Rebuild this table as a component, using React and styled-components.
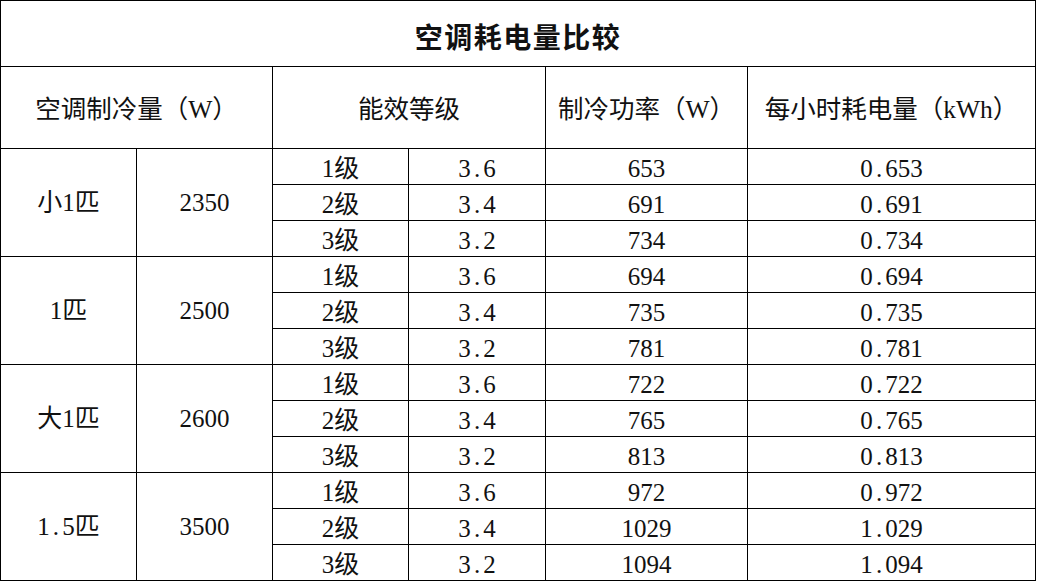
import React from 'react'
import styled, { createGlobalStyle } from 'styled-components'

const GlobalStyle = createGlobalStyle`
  html, body {
    margin: 0;
    padding: 0;
    background: #fff;
  }
  body {
    font-family: "Liberation Serif", "Noto Sans CJK SC", serif;
    color: #000;
  }
`

const Table = styled.table`
  border-collapse: collapse;
  table-layout: fixed;
  width: 1035px;
  font-size: 25px;
  color: #111;

  td, th {
    border: 1px solid #000;
    padding: 0;
    text-align: center;
    vertical-align: middle;
    line-height: 1;
    white-space: nowrap;
  }
`

const TitleCell = styled.th`
  height: 61px;
  font-family: "Noto Sans CJK SC", sans-serif;
  font-size: 28px;
  font-weight: 700;
  letter-spacing: 1.5px;
  padding-top: 4px !important;
`

const HeadCell = styled.th`
  height: 77px;
  font-weight: 400;
  font-size: 25.5px;
  padding-top: 4px !important;
`

const Cell = styled.td`
  height: 31px;
  padding-top: ${p => (p.$group ? '0' : '4px')} !important;
`

const Dot = styled.span`
  display: inline-block;
  width: 0.5em;
  text-align: center;
`

const Num = ({ value }) => {
  const parts = String(value).split('.')
  if (parts.length === 1) return <>{value}</>
  return <>{parts[0]}<Dot>.</Dot>{parts[1]}</>
}

const groups = [
  { name: '小1匹', cap: 2350, rows: [['1级', '3.6', 653, '0.653'], ['2级', '3.4', 691, '0.691'], ['3级', '3.2', 734, '0.734']] },
  { name: '1匹', cap: 2500, rows: [['1级', '3.6', 694, '0.694'], ['2级', '3.4', 735, '0.735'], ['3级', '3.2', 781, '0.781']] },
  { name: '大1匹', cap: 2600, rows: [['1级', '3.6', 722, '0.722'], ['2级', '3.4', 765, '0.765'], ['3级', '3.2', 813, '0.813']] },
  { name: '1.5匹', cap: 3500, rows: [['1级', '3.6', 972, '0.972'], ['2级', '3.4', 1029, '1.029'], ['3级', '3.2', 1094, '1.094']] }
]

const App = () => {
  return <>
    <GlobalStyle />
    <Table>
      <colgroup>
        <col style={{ width: 136 }} />
        <col style={{ width: 136 }} />
        <col style={{ width: 136 }} />
        <col style={{ width: 137 }} />
        <col style={{ width: 202 }} />
        <col style={{ width: 288 }} />
      </colgroup>
      <thead>
        <tr><TitleCell colSpan={6}>空调耗电量比较</TitleCell></tr>
        <tr>
          <HeadCell colSpan={2}>空调制冷量（W）</HeadCell>
          <HeadCell colSpan={2}>能效等级</HeadCell>
          <HeadCell>制冷功率（W）</HeadCell>
          <HeadCell>每小时耗电量（kWh）</HeadCell>
        </tr>
      </thead>
      <tbody>
        {groups.map(g => g.rows.map((r, i) => (
          <tr key={`${g.name}.${i}`}>
            {i === 0 && <Cell $group rowSpan={3}><Num value={g.name} /></Cell>}
            {i === 0 && <Cell $group rowSpan={3}>{g.cap}</Cell>}
            <Cell>{r[0]}</Cell>
            <Cell><Num value={r[1]} /></Cell>
            <Cell>{r[2]}</Cell>
            <Cell><Num value={r[3]} /></Cell>
          </tr>
        )))}
      </tbody>
    </Table>
  </>
}

export default App
